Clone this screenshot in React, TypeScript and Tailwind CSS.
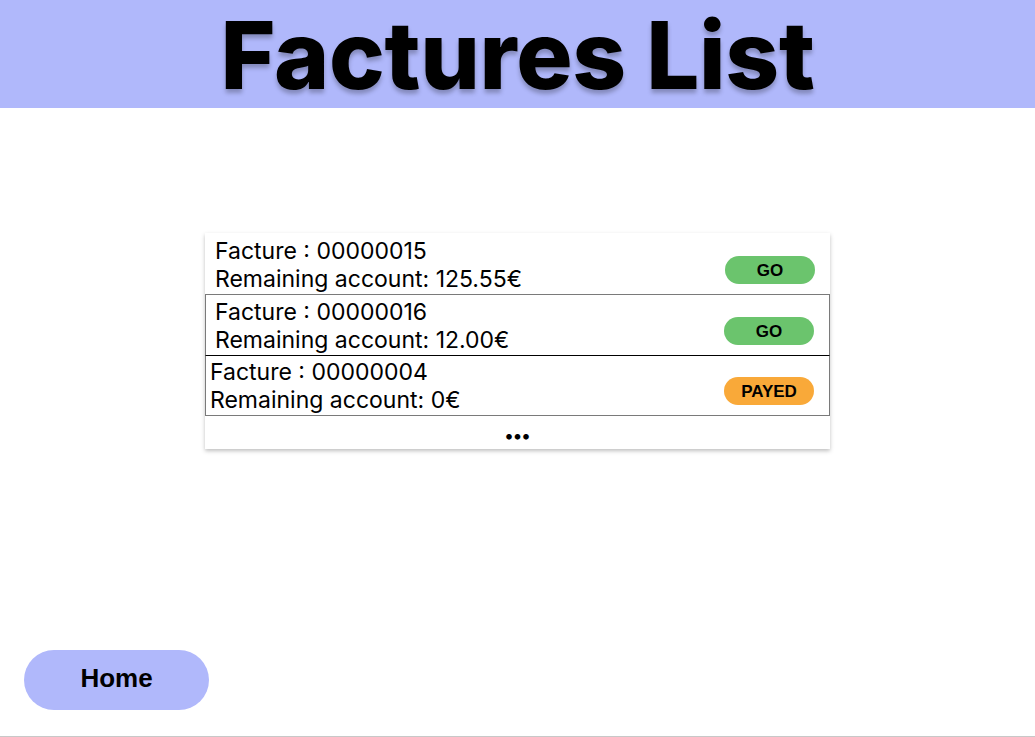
import React from 'react';

interface Facture {
    id: string;
    remaining: string;
    payed: boolean;
}

const factures: Facture[] = [
    { id: '00000015', remaining: '125.55€', payed: false },
    { id: '00000016', remaining: '12.00€', payed: false },
    { id: '00000004', remaining: '0€', payed: true },
];

const rowStyles = [
    'pl-[10px] pt-[4px]',
    'pl-[9px] pt-[3px] border-x border-t border-[#7a7a7a]',
    'pl-[4px] pt-[2px] border border-[#7a7a7a] border-t-black',
];

const App: React.FC = () => {
    return (
        <div className="h-screen flex flex-col bg-white border-b border-[#c8c8c8] font-['Inter',sans-serif] text-black">
            {/* Header */}
            <header className="h-[108px] shrink-0 bg-[#b0b8fb] flex justify-center">
                <h1 className="text-[94px] font-extrabold leading-[104px] tracking-[-0.3px] [text-shadow:0_4px_4px_rgba(0,0,0,0.25)] pt-[3px]">
                    Factures List
                </h1>
            </header>

            {/* Factures list card */}
            <div className="mt-[125px] mx-auto w-[625px] bg-white shadow-[0_2px_4px_rgba(0,0,0,0.25)]">
                {factures.map((f, idx) => (
                    <div key={f.id} className={`h-[61px] flex justify-between ${rowStyles[idx]}`}>
                        <div className="text-[23px] leading-[28px]">
                            <div>Facture : {f.id}</div>
                            <div>Remaining account: {f.remaining}</div>
                        </div>
                        <button
                            className={`mt-[19px] mr-[15px] w-[90px] h-[28px] rounded-full font-['Liberation_Sans',Arial,sans-serif] font-bold text-[17px] leading-none ${
                                f.payed ? 'bg-[#f9a939]' : 'bg-[#6bc46d]'
                            }`}
                        >
                            {f.payed ? 'PAYED' : 'GO'}
                        </button>
                    </div>
                ))}
                <div className="h-[33px] flex items-center justify-center font-bold text-[18px] leading-none pt-[6px]">
                    •••
                </div>
            </div>

            {/* Home button */}
            <div className="mt-auto pl-[24px] pb-[26px]">
                <button className="w-[185px] h-[60px] rounded-full bg-[#b0b8fb] font-['Liberation_Sans',Arial,sans-serif] font-bold text-[26px] pb-[3px]">
                    Home
                </button>
            </div>
        </div>
    );
};

export default App;
